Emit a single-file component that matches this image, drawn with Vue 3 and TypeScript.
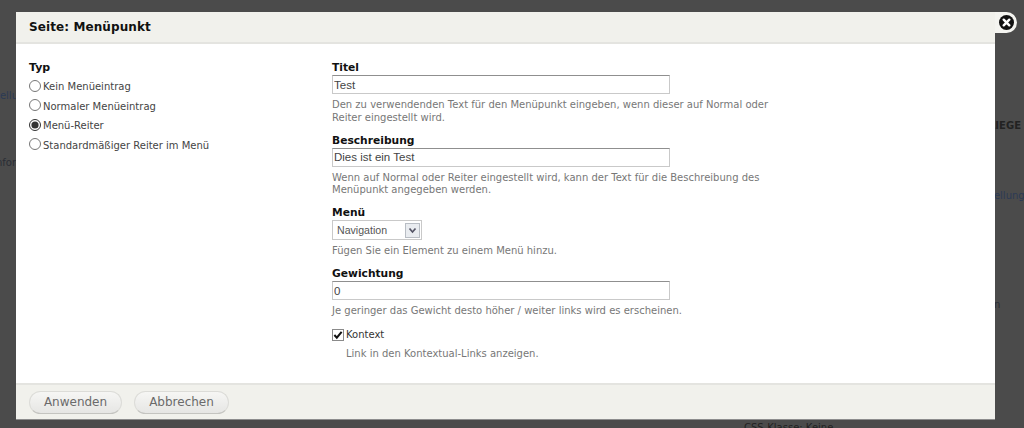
<script setup lang="ts">
const types = [
  { label: 'Kein Menüeintrag', checked: false },
  { label: 'Normaler Menüeintrag', checked: false },
  { label: 'Menü-Reiter', checked: true },
  { label: 'Standardmäßiger Reiter im Menü', checked: false },
]
</script>

<template>
  <div class="page">
    <span class="bg bg-a">tellu</span>
    <span class="bg bg-b">nfor</span>
    <span class="bg bg-c">LIEGE</span>
    <span class="bg bg-d">tellung</span>
    <span class="bg bg-e">n</span>
    <span class="bg bg-f">CSS-Klasse: Keine</span>

    <section class="modal">
      <header class="head"><h1>Seite: Menüpunkt</h1></header>
      <div class="body">
        <div class="left">
          <div class="label type-label">Typ</div>
          <label v-for="t in types" :key="t.label" class="radio">
            <input type="radio" name="typ" :checked="t.checked" />
            <span>{{ t.label }}</span>
          </label>
        </div>
        <div class="right">
          <div class="field">
            <div class="label">Titel</div>
            <input class="text" type="text" value="Test" />
            <p class="desc">Den zu verwendenden Text für den Menüpunkt eingeben, wenn dieser auf Normal oder<br />Reiter eingestellt wird.</p>
          </div>
          <div class="field">
            <div class="label">Beschreibung</div>
            <input class="text" type="text" value="Dies ist ein Test" />
            <p class="desc">Wenn auf Normal oder Reiter eingestellt wird, kann der Text für die Beschreibung des<br />Menüpunkt angegeben werden.</p>
          </div>
          <div class="field">
            <div class="label">Menü</div>
            <div class="select">
              <span>Navigation</span>
              <span class="arrow">
                <svg width="9" height="7" viewBox="0 0 9 7"><path d="M1.5 1.5 4.5 5 7.5 1.5" fill="none" stroke="#556" stroke-width="1.7" /></svg>
              </span>
            </div>
            <p class="desc">Fügen Sie ein Element zu einem Menü hinzu.</p>
          </div>
          <div class="field">
            <div class="label">Gewichtung</div>
            <input class="text" type="text" value="0" />
            <p class="desc">Je geringer das Gewicht desto höher / weiter links wird es erscheinen.</p>
          </div>
          <label class="check">
            <span class="box">
              <svg width="11" height="10" viewBox="0 0 11 10"><path d="M1.5 5 4.2 8 9.5 1.5" fill="none" stroke="#111" stroke-width="2.2" /></svg>
            </span>
            <span>Kontext</span>
          </label>
          <p class="desc check-desc">Link in den Kontextual-Links anzeigen.</p>
        </div>
      </div>
      <footer class="foot">
        <button type="button">Anwenden</button>
        <button type="button">Abbrechen</button>
      </footer>
      <button class="close" type="button" aria-label="Schließen">
        <svg width="15" height="15" viewBox="0 0 16 16">
          <circle cx="8" cy="8" r="8" fill="#111" />
          <path d="M5 5 11 11M11 5 5 11" stroke="#fff" stroke-width="2.6" stroke-linecap="round" />
        </svg>
      </button>
    </section>
  </div>
</template>

<style>
html, body { margin: 0; background: #4b4b4b; }
</style>

<style scoped>
.page {
  position: relative;
  width: 1024px;
  height: 428px;
  overflow: hidden;
  background: #4b4b4b;
  font-family: "DejaVu Sans", Verdana, sans-serif;
  font-size: 10px;
  color: #3b3b3b;
}
.bg { position: absolute; font-size: 10px; color: #2a2d35; white-space: nowrap; }
.bg-a { left: -4px; top: 90px; color: #2c3a55; }
.bg-b { left: -4px; top: 157px; }
.bg-c { left: 989px; top: 120px; font-weight: 700; color: #222; }
.bg-d { left: 990px; top: 190px; color: #2c3a55; }
.bg-e { left: 994px; top: 299px; }
.bg-f { left: 744px; top: 422px; color: #222; }
.modal {
  position: absolute;
  left: 16px;
  top: 12px;
  width: 979px;
  height: 407px;
  display: flex;
  flex-direction: column;
  background: #fff;
  box-shadow: 0 1px 0 #8d8d8d;
}
.head {
  height: 32px;
  box-sizing: border-box;
  padding: 0 13px;
  display: flex;
  align-items: center;
  background: #f1f1ec;
  border-bottom: 2px solid #e4e4e0;
}
h1 { margin: 0; font-size: 12px; font-weight: 700; color: #111; letter-spacing: .1px; }
.body {
  flex: 1;
  display: grid;
  grid-template-columns: 303px 1fr;
  padding: 17px 13px 0;
}
.label { font-size: 10.7px; font-weight: 700; color: #111; line-height: 14px; }
.type-label { margin-bottom: 2px; font-size: 11px; }
.radio {
  display: flex;
  align-items: center;
  gap: 2px;
  height: 19.5px;
  color: #444;
}
.radio input { width: 12px; height: 12px; margin: 0 0 2px 0; accent-color: #333; }
.field { margin-bottom: 9.5px; }
.text {
  display: block;
  box-sizing: border-box;
  width: 338px;
  height: 19px;
  padding: 0 1px;
  border: 1px solid #c9c9c9;
  border-top-color: #8f8f8f;
  border-radius: 0;
  outline: none;
  font-family: "Liberation Sans", Arial, sans-serif;
  font-size: 11.5px;
  color: #444;
  background: #fff;
}
.desc { margin: 5px 0 0; line-height: 12.5px; color: #777; font-size: 10px; }
.select {
  box-sizing: border-box;
  display: flex;
  align-items: center;
  justify-content: space-between;
  width: 90px;
  height: 20px;
  padding: 0 1px 0 4px;
  border: 1px solid #c9c9c9;
  font-family: "Liberation Sans", Arial, sans-serif;
  font-size: 10.6px;
  color: #555;
}
.arrow {
  width: 15px;
  height: 15px;
  display: flex;
  align-items: center;
  justify-content: center;
  box-sizing: border-box;
  border: 1px solid #b8bdc4;
  background: #e9ecf0;
}
.check { display: flex; align-items: center; gap: 2px; height: 15px; color: #333; }
.box {
  box-sizing: border-box;
  width: 12px;
  height: 12px;
  border: 1px solid #8a8a8a;
  display: flex;
  align-items: center;
  justify-content: center;
}
.check-desc { margin: 6px 0 0 14px; }
.foot {
  height: 36px;
  box-sizing: border-box;
  display: flex;
  align-items: center;
  gap: 12px;
  padding: 0 13px;
  background: #f1f1ec;
  border-top: 2px solid #e4e4e0;
}
.foot button {
  box-sizing: border-box;
  width: 93px;
  height: 23px;
  padding: 0;
  border: 1px solid #dcdcd8;
  border-bottom-color: #c4c4c0;
  border-radius: 12px;
  background: linear-gradient(#f6f6f4, #e6e6e4);
  font: 12px "DejaVu Sans", Verdana, sans-serif;
  color: #6a6a6a;
}
.foot button + button { width: 95px; }
.close {
  position: absolute;
  right: -22px;
  top: 0;
  width: 22px;
  height: 21px;
  padding: 0 0 0 4px;
  border: 0;
  border-radius: 0 11px 11px 0;
  background: #f4f4f0;
  display: flex;
  align-items: center;
  justify-content: flex-start;
}
</style>
